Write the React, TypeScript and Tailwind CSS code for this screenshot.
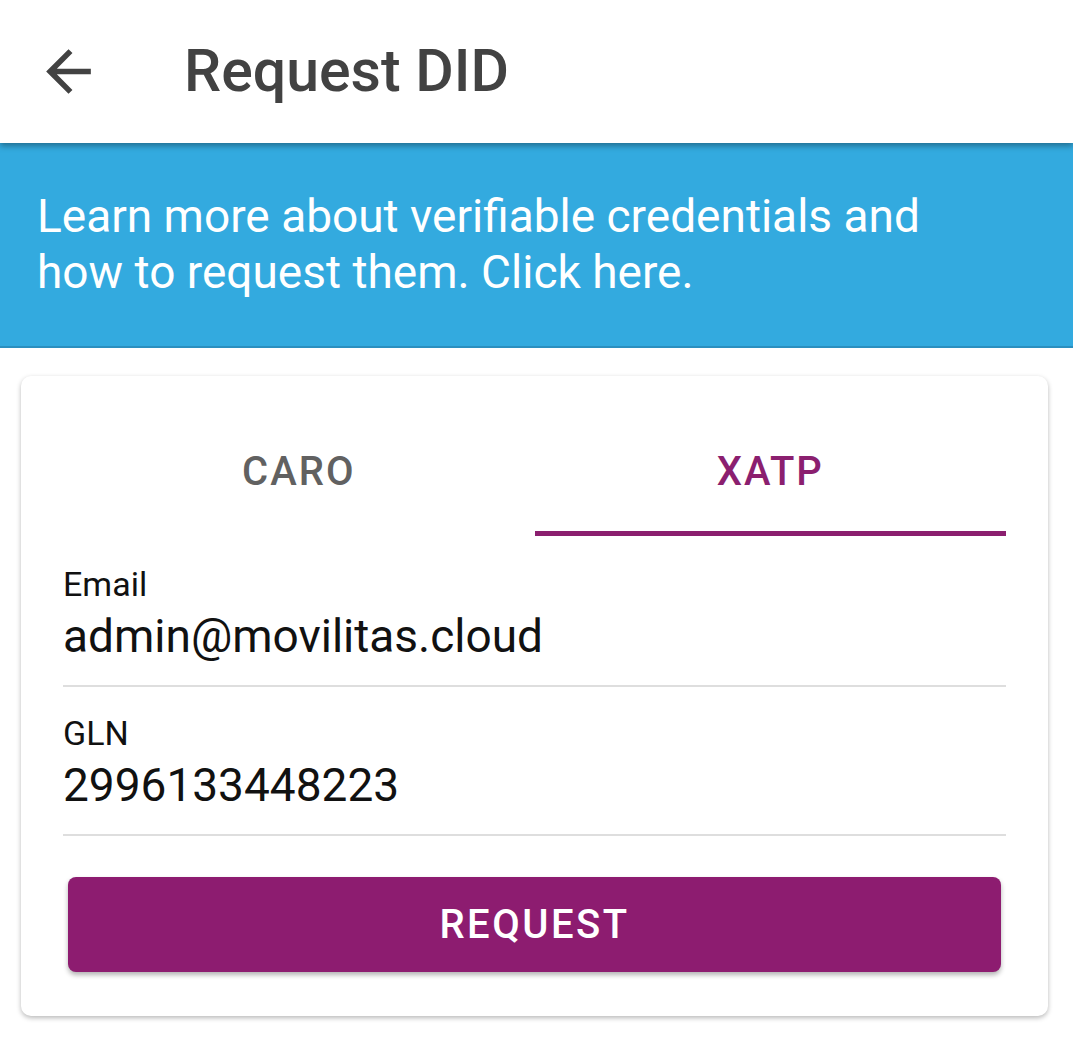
import React, { useState } from 'react'

const font = { fontFamily: 'Roboto, "Noto Sans", sans-serif' }

const BackArrow = () => (
    <svg width="67" height="67" viewBox="0 0 24 24" fill="#424242">
        <path d="M20 11H7.83l5.59-5.59L12 4l-8 8 8 8 1.41-1.41L7.83 13H20v-2z" />
    </svg>
)

const Field = ({ label, value }: { label: string, value: string }) => {
    return (
        <div className="flex flex-col">
            <div className="text-[34px] leading-[40px] text-[#111]">{label}</div>
            <div className="mt-[5px] text-[46px] leading-[54px] text-[#111]">{value}</div>
            <div className="mt-[22px] h-[2px] bg-[#dedede]" />
        </div>
    )
}

const App = () => {
    const [tab, setTab] = useState<"CARO" | "XATP">("XATP")

    return (
        <div className="min-h-[1044px] bg-white" style={font}>
            <header className="relative z-10 flex h-[143px] items-center bg-white pl-[35px] shadow-[0_3px_6px_rgba(0,0,0,0.35)]">
                <BackArrow />
                <h1 className="ml-[82px] text-[59px] font-medium text-[#424242]">Request DID</h1>
            </header>

            <div className="border-b-2 border-[#2b8fbf] bg-[#33aadf] px-[37px] pt-[45px] pb-[46px]">
                <p className="text-[46px] leading-[56px] text-white">
                    Learn more about verifiable credentials and<br />
                    how to request them. Click here.
                </p>
            </div>

            <div className="ml-[21px] mr-[25px] mt-[28px] rounded-[10px] bg-white px-[42px] pt-[44px] pb-[44px] shadow-[0_2px_5px_rgba(0,0,0,0.28)]">
                <div className="flex">
                    {(["CARO", "XATP"] as const).map(t => (
                        <button
                            key={t}
                            onClick={() => setTab(t)}
                            className="flex flex-1 flex-col items-center"
                        >
                            <span className={`pt-[32px] pb-[39px] text-[40px] leading-[40px] font-medium tracking-[2px] ${tab === t ? 'text-[#8b1f6f]' : 'text-[#616161]'}`}>
                                {t}
                            </span>
                            <span className={`h-[5px] w-full ${tab === t ? 'bg-[#8b1f6f]' : 'bg-transparent'}`} />
                        </button>
                    ))}
                </div>

                <div className="mt-[28px] flex flex-col gap-[26px]">
                    <Field label="Email" value="admin@movilitas.cloud" />
                    <Field label="GLN" value="2996133448223" />
                </div>

                <button className="mx-[5px] mt-[41px] flex h-[95px] w-[calc(100%-10px)] items-center justify-center rounded-[8px] bg-[#8d1c70] text-[40px] font-medium tracking-[2.5px] text-white shadow-[0_3px_5px_rgba(0,0,0,0.3)]">
                    REQUEST
                </button>
            </div>
        </div>
    )
}

export default App
